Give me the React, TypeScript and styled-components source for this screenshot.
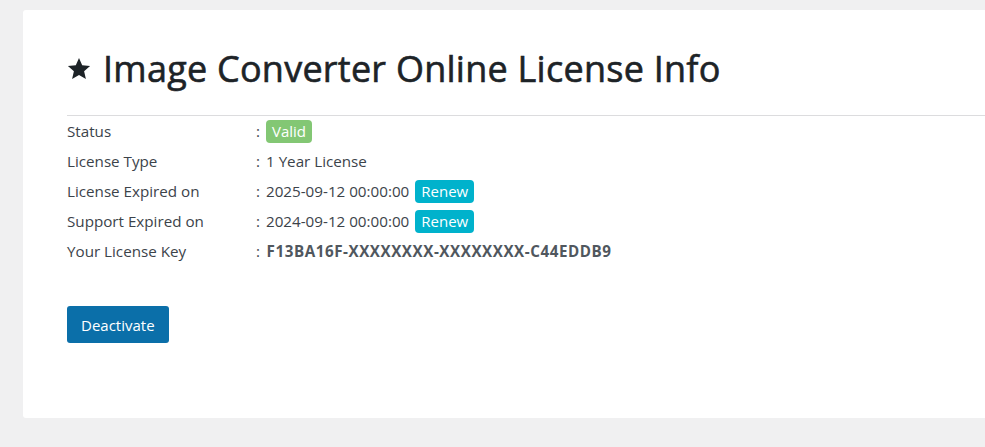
import React from "react";
import styled, { createGlobalStyle } from "styled-components";

const GlobalStyle = createGlobalStyle`
  html, body {
    margin: 0;
    padding: 0;
    background: #f0f0f1;
    font-family: "Open Sans", "Noto Sans", sans-serif;
    color: #3c434a;
  }
`;

const Page = styled.div`
  padding: 10px 0 29px 23px;
  overflow: hidden;
`;

const Card = styled.div`
  background: #fff;
  border-radius: 3px 0 0 3px;
  padding: 34px 0 75px 44px;
  min-height: 299px;
`;

const Title = styled.h1`
  margin: 0;
  font-size: 36px;
  font-weight: 400;
  color: #1d2327;
  display: flex;
  align-items: center;
  gap: 12px;
  line-height: 50px;
  letter-spacing: 0.25px;
  -webkit-text-stroke: 0.6px #1d2327;
`;

const Divider = styled.hr`
  border: 0;
  border-top: 1px solid #dcdcde;
  margin: 21px 0 0;
`;

const InfoTable = styled.div`
  display: grid;
  grid-template-columns: 189px auto;
  grid-auto-rows: 30px;
  font-size: 15.2px;
`;

const Label = styled.div`
  display: flex;
  align-items: center;
`;

const Value = styled.div<{ $bold?: boolean }>`
  display: flex;
  align-items: center;
  gap: 6px;
  font-weight: ${(p) => (p.$bold ? 700 : 400)};
  letter-spacing: ${(p) => (p.$bold ? "0.55px" : "0")};
  color: ${(p) => (p.$bold ? "#50575e" : "#3c434a")};

  &::before {
    content: ":";
    font-weight: 400;
    color: #3c434a;
  }
`;

const Badge = styled.span<{ $tone: "green" | "cyan" }>`
  display: inline-block;
  padding: 2px 6px 3px;
  border-radius: 4px;
  color: #fff;
  font-size: 15px;
  line-height: 18px;
  letter-spacing: 0;
  background: ${(p) => (p.$tone === "green" ? "#83c774" : "#00b2cc")};
`;

const Button = styled.button`
  margin-top: 40px;
  background: #0b6fa9;
  color: #fff;
  border: 0;
  border-radius: 3px;
  font-family: inherit;
  font-size: 15px;
  padding: 0 14px;
  height: 37px;
  cursor: pointer;
`;

const Star = () => (
  <svg width="24" height="24" viewBox="0 0 24 24" aria-hidden="true">
    <path
      fill="#1d2327"
      d="M12 1l3.2 7.3 7.9.7-6 5.3 1.8 7.7L12 17.9l-6.9 4.1 1.8-7.7-6-5.3 7.9-.7z"
    />
  </svg>
);

const rows: { label: string; value: string; badge?: { text: string; tone: "green" | "cyan" }; bold?: boolean }[] = [
  { label: "Status", value: "", badge: { text: "Valid", tone: "green" } },
  { label: "License Type", value: "1 Year License" },
  { label: "License Expired on", value: "2025-09-12 00:00:00", badge: { text: "Renew", tone: "cyan" } },
  { label: "Support Expired on", value: "2024-09-12 00:00:00", badge: { text: "Renew", tone: "cyan" } },
  { label: "Your License Key", value: "F13BA16F-XXXXXXXX-XXXXXXXX-C44EDDB9", bold: true },
];

export default function App() {
  return (
    <Page>
      <GlobalStyle />
      <Card>
        <Title>
          <Star />
          Image Converter Online License Info
        </Title>
        <Divider />
        <InfoTable>
          {rows.map((r) => (
            <React.Fragment key={r.label}>
              <Label>{r.label}</Label>
              <Value $bold={r.bold}>
                {r.value && <span>{r.value}</span>}
                {r.badge && <Badge $tone={r.badge.tone}>{r.badge.text}</Badge>}
              </Value>
            </React.Fragment>
          ))}
        </InfoTable>
        <Button>Deactivate</Button>
      </Card>
    </Page>
  );
}
